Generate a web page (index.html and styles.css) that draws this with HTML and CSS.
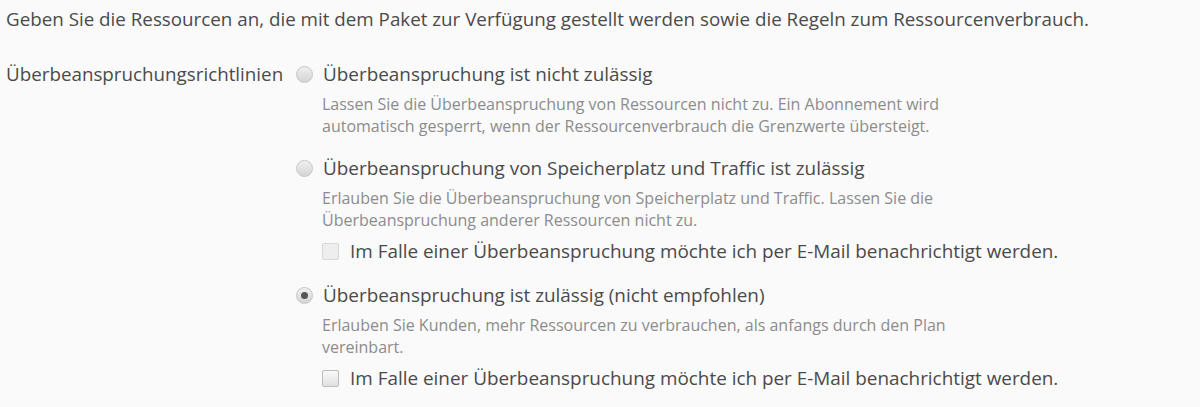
FILE: index.html
```html
<!DOCTYPE html>
<html lang="de">
<head>
  <meta charset="UTF-8" />
  <meta name="viewport" content="width=device-width, initial-scale=1.0" />
  <title>Ressourcen</title>
  <link rel="stylesheet" href="styles.css">
</head>
<body>
  <p class="intro">Geben Sie die Ressourcen an, die mit dem Paket zur Verfügung gestellt werden sowie die Regeln zum Ressourcenverbrauch.</p>

  <div class="form-row">
    <div class="field-label">Überbeanspruchungsrichtlinien</div>
    <div class="options">
      <div class="option">
        <label class="option-title"><span class="radio"></span>Überbeanspruchung ist nicht zulässig</label>
        <div class="hint">Lassen Sie die Überbeanspruchung von Ressourcen nicht zu. Ein Abonnement wird<br>automatisch gesperrt, wenn der Ressourcenverbrauch die Grenzwerte übersteigt.</div>
      </div>

      <div class="option">
        <label class="option-title"><span class="radio"></span>Überbeanspruchung von Speicherplatz und Traffic ist zulässig</label>
        <div class="hint">Erlauben Sie die Überbeanspruchung von Speicherplatz und Traffic. Lassen Sie die<br>Überbeanspruchung anderer Ressourcen nicht zu.</div>
        <label class="check-row disabled"><span class="checkbox"></span>Im Falle einer Überbeanspruchung möchte ich per E-Mail benachrichtigt werden.</label>
      </div>

      <div class="option">
        <label class="option-title"><span class="radio checked"></span>Überbeanspruchung ist zulässig (nicht empfohlen)</label>
        <div class="hint">Erlauben Sie Kunden, mehr Ressourcen zu verbrauchen, als anfangs durch den Plan<br>vereinbart.</div>
        <label class="check-row"><span class="checkbox"></span>Im Falle einer Überbeanspruchung möchte ich per E-Mail benachrichtigt werden.</label>
      </div>
    </div>
  </div>
</body>
</html>
```

FILE: styles.css
```css
body {
  font-family: 'Open Sans', 'Liberation Sans', sans-serif;
  background-color: #fafafa;
  color: #4a4a4a;
  margin: 0;
  padding: 6px 6px;
}
.intro {
  font-size: 18.8px;
  line-height: 26px;
  margin: 0 0 29px;
}
.form-row {
  display: flex;
  align-items: flex-start;
}
.field-label {
  font-size: 18.8px;
  line-height: 26px;
  width: 316px;
  flex-shrink: 0;
}
.options {
  display: flex;
  flex-direction: column;
  gap: 18px;
}
.option-title {
  display: flex;
  align-items: center;
  font-size: 18.9px;
  line-height: 26px;
  margin-left: -26px;
}
.radio {
  width: 15px;
  height: 15px;
  border: 1px solid #c6c6c6;
  border-radius: 50%;
  background: linear-gradient(#f0f0f0, #d4d4d4);
  margin-right: 10px;
  position: relative;
  flex-shrink: 0;
}
.radio.checked::after {
  content: '';
  position: absolute;
  left: 4px;
  top: 4px;
  width: 7px;
  height: 7px;
  border-radius: 50%;
  background: #555;
}
.hint {
  font-size: 16px;
  line-height: 22px;
  color: #8c8c8c;
  margin-top: 6px;
}
.check-row {
  display: flex;
  align-items: center;
  font-size: 18.9px;
  line-height: 26px;
  margin-top: 7px;
}
.checkbox {
  width: 15px;
  height: 15px;
  border: 1px solid #bcbcbc;
  border-radius: 2px;
  background: linear-gradient(#fafafa, #e0e0e0);
  margin-right: 11px;
  flex-shrink: 0;
}
.check-row.disabled .checkbox {
  border-color: #d8d8d8;
  background: #eeeeee;
}
```
